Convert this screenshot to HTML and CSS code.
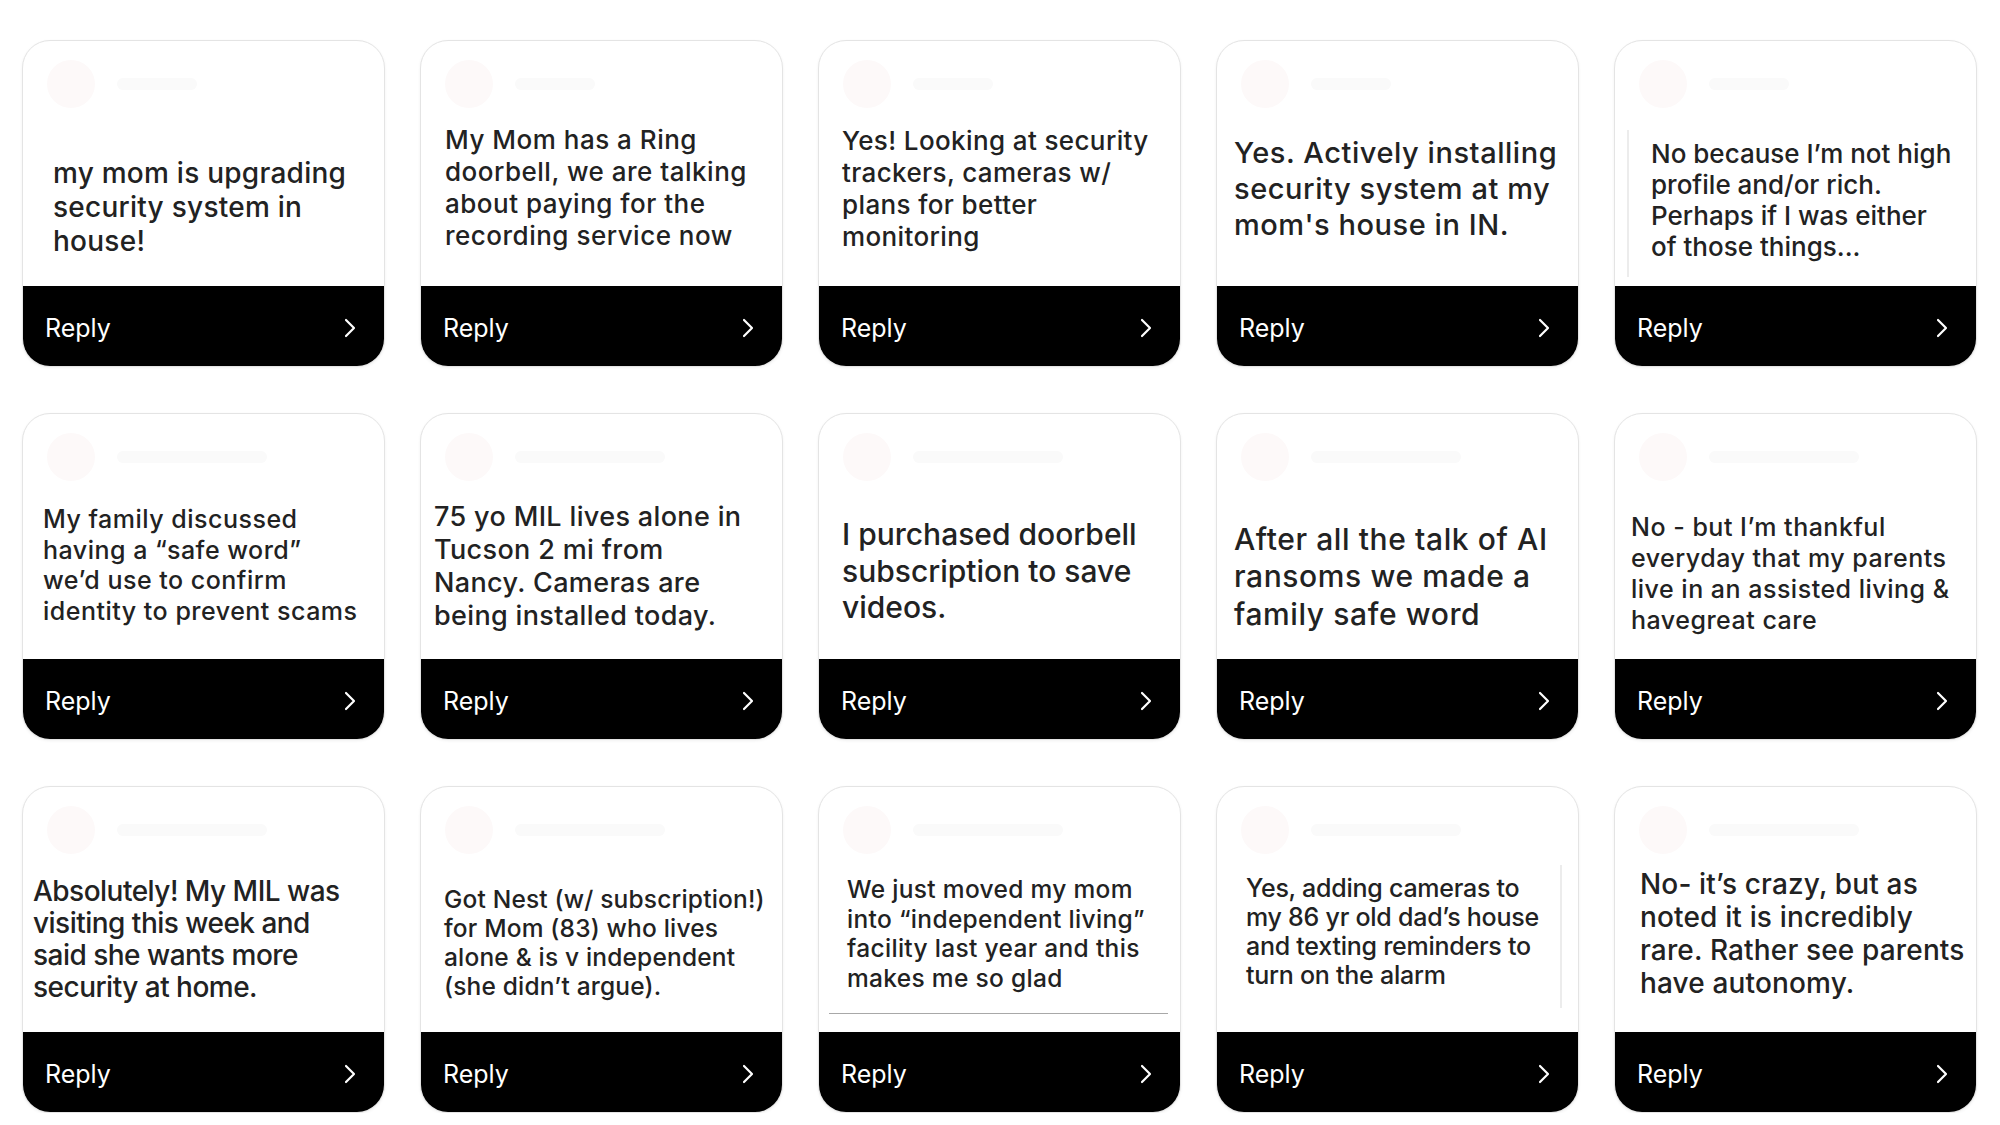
FILE: index.html
```html
<!DOCTYPE html>
<html lang="en">
<head>
<meta charset="utf-8">
<title>Replies</title>
<link rel="stylesheet" href="styles.css">
</head>
<body>
<main class="grid">

  <article class="card c1">
    <div class="body"><div class="head"><span class="avatar"></span><span class="name"></span></div>
      <p class="msg">my mom is upgrading<br>security system in<br>house!</p></div>
    <div class="foot"><span>Reply</span><svg class="chev" viewBox="0 0 12 20"><polyline points="2,2 10,10 2,18"/></svg></div>
  </article>

  <article class="card c2">
    <div class="body"><div class="head"><span class="avatar"></span><span class="name"></span></div>
      <p class="msg">My Mom has a Ring<br>doorbell, we are talking<br>about paying for the<br>recording service now</p></div>
    <div class="foot"><span>Reply</span><svg class="chev" viewBox="0 0 12 20"><polyline points="2,2 10,10 2,18"/></svg></div>
  </article>

  <article class="card c3">
    <div class="body"><div class="head"><span class="avatar"></span><span class="name"></span></div>
      <p class="msg">Yes! Looking at security<br>trackers, cameras w/<br>plans for better<br>monitoring</p></div>
    <div class="foot"><span>Reply</span><svg class="chev" viewBox="0 0 12 20"><polyline points="2,2 10,10 2,18"/></svg></div>
  </article>

  <article class="card c4">
    <div class="body"><div class="head"><span class="avatar"></span><span class="name"></span></div>
      <p class="msg">Yes. Actively installing<br>security system at my<br>mom's house in IN.</p></div>
    <div class="foot"><span>Reply</span><svg class="chev" viewBox="0 0 12 20"><polyline points="2,2 10,10 2,18"/></svg></div>
  </article>

  <article class="card c5">
    <div class="body"><div class="head"><span class="avatar"></span><span class="name"></span></div>
      <div class="quote-left"><p class="msg">No because I’m not high<br>profile and/or rich.<br>Perhaps if I was either<br>of those things...</p></div></div>
    <div class="foot"><span>Reply</span><svg class="chev" viewBox="0 0 12 20"><polyline points="2,2 10,10 2,18"/></svg></div>
  </article>

  <article class="card c6">
    <div class="body"><div class="head"><span class="avatar"></span><span class="name wide"></span></div>
      <p class="msg">My family discussed<br>having a “safe word”<br>we’d use to confirm<br>identity to prevent scams</p></div>
    <div class="foot"><span>Reply</span><svg class="chev" viewBox="0 0 12 20"><polyline points="2,2 10,10 2,18"/></svg></div>
  </article>

  <article class="card c7">
    <div class="body"><div class="head"><span class="avatar"></span><span class="name wide"></span></div>
      <p class="msg">75 yo MIL lives alone in<br>Tucson 2 mi from<br>Nancy. Cameras are<br>being installed today.</p></div>
    <div class="foot"><span>Reply</span><svg class="chev" viewBox="0 0 12 20"><polyline points="2,2 10,10 2,18"/></svg></div>
  </article>

  <article class="card c8">
    <div class="body"><div class="head"><span class="avatar"></span><span class="name wide"></span></div>
      <p class="msg">I purchased doorbell<br>subscription to save<br>videos.</p></div>
    <div class="foot"><span>Reply</span><svg class="chev" viewBox="0 0 12 20"><polyline points="2,2 10,10 2,18"/></svg></div>
  </article>

  <article class="card c9">
    <div class="body"><div class="head"><span class="avatar"></span><span class="name wide"></span></div>
      <p class="msg">After all the talk of AI<br>ransoms we made a<br>family safe word</p></div>
    <div class="foot"><span>Reply</span><svg class="chev" viewBox="0 0 12 20"><polyline points="2,2 10,10 2,18"/></svg></div>
  </article>

  <article class="card c10">
    <div class="body"><div class="head"><span class="avatar"></span><span class="name wide"></span></div>
      <p class="msg">No - but I’m thankful<br>everyday that my parents<br>live in an assisted living &amp;<br>havegreat care</p></div>
    <div class="foot"><span>Reply</span><svg class="chev" viewBox="0 0 12 20"><polyline points="2,2 10,10 2,18"/></svg></div>
  </article>

  <article class="card c11">
    <div class="body"><div class="head"><span class="avatar"></span><span class="name wide"></span></div>
      <p class="msg">Absolutely! My MIL was<br>visiting this week and<br>said she wants more<br>security at home.</p></div>
    <div class="foot"><span>Reply</span><svg class="chev" viewBox="0 0 12 20"><polyline points="2,2 10,10 2,18"/></svg></div>
  </article>

  <article class="card c12">
    <div class="body"><div class="head"><span class="avatar"></span><span class="name wide"></span></div>
      <p class="msg">Got Nest (w/ subscription!)<br>for Mom (83) who lives<br>alone &amp; is v independent<br>(she didn’t argue).</p></div>
    <div class="foot"><span>Reply</span><svg class="chev" viewBox="0 0 12 20"><polyline points="2,2 10,10 2,18"/></svg></div>
  </article>

  <article class="card c13">
    <div class="body"><div class="head"><span class="avatar"></span><span class="name wide"></span></div>
      <p class="msg">We just moved my mom<br>into “independent living”<br>facility last year and this<br>makes me so glad</p>
      <div class="rule"></div></div>
    <div class="foot"><span>Reply</span><svg class="chev" viewBox="0 0 12 20"><polyline points="2,2 10,10 2,18"/></svg></div>
  </article>

  <article class="card c14">
    <div class="body"><div class="head"><span class="avatar"></span><span class="name wide"></span></div>
      <div class="quote-right"><p class="msg">Yes, adding cameras to<br>my 86 yr old dad’s house<br>and texting reminders to<br>turn on the alarm</p></div></div>
    <div class="foot"><span>Reply</span><svg class="chev" viewBox="0 0 12 20"><polyline points="2,2 10,10 2,18"/></svg></div>
  </article>

  <article class="card c15">
    <div class="body"><div class="head"><span class="avatar"></span><span class="name wide"></span></div>
      <p class="msg">No- it’s crazy, but as<br>noted it is incredibly<br>rare. Rather see parents<br>have autonomy.</p></div>
    <div class="foot"><span>Reply</span><svg class="chev" viewBox="0 0 12 20"><polyline points="2,2 10,10 2,18"/></svg></div>
  </article>

</main>
</body>
</html>
```

FILE: styles.css
```css
html, body {
  margin: 0;
  padding: 0;
  background: #ffffff;
}

body {
  font-family: "Inter", "Liberation Sans", sans-serif;
  color: #222222;
}

.grid {
  display: grid;
  grid-template-columns: repeat(5, 363px);
  grid-auto-rows: 327px;
  column-gap: 35px;
  row-gap: 46px;
  padding: 40px 0 0 22px;
}

.card {
  display: flex;
  flex-direction: column;
  border: 1px solid #e4e4e4;
  border-radius: 28px;
  overflow: hidden;
  background: #fff;
  box-shadow: 0 1px 3px rgba(0, 0, 0, 0.06);
  box-sizing: border-box;
}

.body {
  flex: 1;
  display: flex;
  flex-direction: column;
  min-height: 0;
}

.head {
  display: flex;
  align-items: center;
  gap: 22px;
  height: 48px;
  padding: 19px 0 0 24px;
  flex: none;
}

.avatar {
  width: 48px;
  height: 48px;
  border-radius: 50%;
  background: #fdf9f9;
}

.name {
  width: 80px;
  height: 12px;
  border-radius: 6px;
  background: #fafafa;
}

.name.wide {
  width: 150px;
}

.msg {
  margin: 0;
  font-weight: 500;
  white-space: nowrap;
}

.foot {
  flex: none;
  height: 80px;
  background: #000;
  color: #fff;
  display: flex;
  align-items: center;
  justify-content: space-between;
  padding: 0 28px 0 22px;
  font-size: 25px;
  font-weight: 400;
}

.foot span {
  margin-top: 4px;
}

.chev {
  width: 12px;
  height: 20px;
  margin-top: 4px;
  fill: none;
  stroke: #fff;
  stroke-width: 2.2;
  stroke-linecap: round;
  stroke-linejoin: round;
}

/* per-card text placement */
.c1 .msg  { font-size: 28px; line-height: 34px;   margin: 48px 0 0 30px; letter-spacing: 0.25px; }
.c2 .msg  { font-size: 26px; line-height: 32px;   margin: 16px 0 0 24px; letter-spacing: 0.5px; }
.c3 .msg  { font-size: 26px; line-height: 32px;   margin: 17px 0 0 23px; letter-spacing: 0.38px; }
.c4 .msg  { font-size: 29px; line-height: 36px;   margin: 27px 0 0 17px; letter-spacing: 0.55px; }

.c5 .quote-left {
  margin: 22px 0 0 12px;
  height: 147px;
  box-sizing: border-box;
  border-left: 2px solid #ececec;
  padding: 8px 0 0 22px;
}
.c5 .msg  { font-size: 26px; line-height: 31px; letter-spacing: 0px; }

.c6 .msg  { font-size: 25px; line-height: 30.5px; margin: 23px 0 0 20px; letter-spacing: 0.5px; }
.c7 .msg  { font-size: 27px; line-height: 33px;   margin: 19px 0 0 13px; letter-spacing: 0.35px; }
.c8 .msg  { font-size: 30px; line-height: 36.5px; margin: 35px 0 0 23px; letter-spacing: 0px; }
.c9 .msg  { font-size: 30px; line-height: 37.5px; margin: 39.5px 0 0 17px; letter-spacing: 0.6px; }
.c10 .msg { font-size: 25px; line-height: 31px;   margin: 31px 0 0 16px; letter-spacing: 0.5px; }

.c11 .msg { font-size: 28px; line-height: 32px;   margin: 20.5px 0 0 10px; letter-spacing: -0.52px; }
.c12 .msg { font-size: 24.5px; line-height: 29px; margin: 31px 0 0 23px; letter-spacing: 0.18px; }
.c13 .msg { font-size: 24.5px; line-height: 29.5px; margin: 21px 0 0 28px; letter-spacing: 0.32px; }

.c13 .rule {
  margin: auto 12px 18px 10px;
  height: 1px;
  background: #a8a8a8;
}

.c14 .quote-right {
  margin: 11px 16px 0 0;
  height: 143px;
  box-sizing: border-box;
  border-right: 2px solid #ececec;
  padding: 9px 0 0 29px;
}
.c14 .msg { font-size: 25px; line-height: 29px; letter-spacing: -0.25px; }

.c15 .msg { font-size: 28px; line-height: 33px;   margin: 14px 0 0 25px; letter-spacing: 0.15px; }
```
